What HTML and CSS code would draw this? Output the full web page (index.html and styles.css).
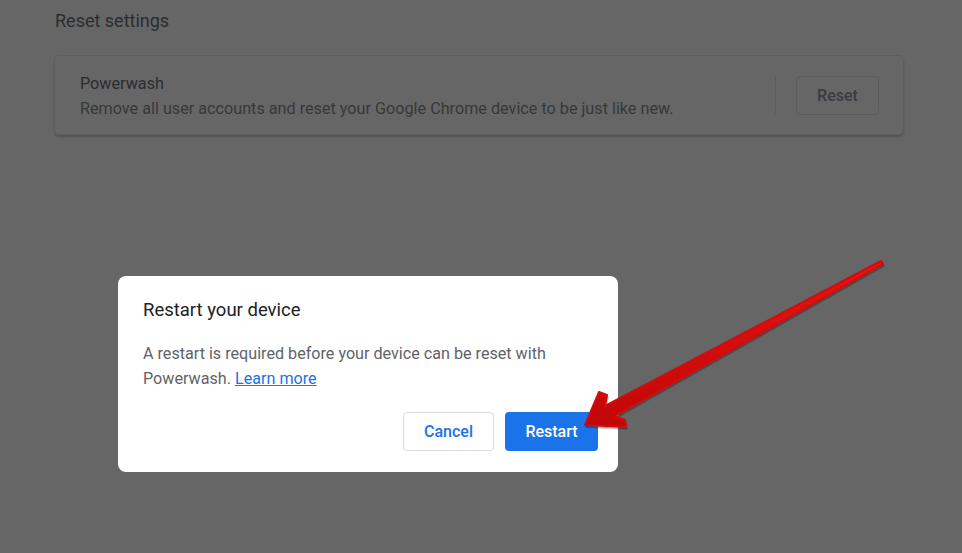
FILE: index.html
```html
<!DOCTYPE html>
<html lang="en">
<head>
    <meta charset="UTF-8">
    <meta name="viewport" content="width=device-width, initial-scale=1.0">
    <title>Reset settings</title>
    <link rel="stylesheet" href="styles.css">
</head>
<body>
    <div class="page">
        <h2 class="section-title">Reset settings</h2>
        <div class="card">
            <div class="card-text">
                <div class="card-label">Powerwash</div>
                <div class="card-sub">Remove all user accounts and reset your Google Chrome device to be just like new.</div>
            </div>
            <div class="separator"></div>
            <button class="reset-btn">Reset</button>
        </div>
    </div>

    <!-- Restart dialog -->
    <div class="dialog-box">
        <h3 class="dialog-title">Restart your device</h3>
        <p class="dialog-body">A restart is required before your device can be reset with Powerwash. <a href="#">Learn more</a></p>
        <div class="dialog-buttons">
            <button class="cancel-btn">Cancel</button>
            <button class="confirm-btn">Restart</button>
        </div>
    </div>

    <!-- annotation arrow -->
    <svg class="arrow" width="962" height="553" viewBox="0 0 962 553">
        <defs>
            <linearGradient id="red" x1="0" y1="0" x2="0" y2="1">
                <stop offset="0" stop-color="#e81414"/>
                <stop offset="1" stop-color="#c10606"/>
            </linearGradient>
        </defs>
        <polygon class="arrow-shadow" points="586,427 600,394 608,397 606,408 882,263 884,266 616,418 626,422 627,429"/>
        <polygon class="arrow-head" points="585,425 599,392 607,395 605,406 881,261 883,264 615,416 625,420 626,427"/>
    </svg>
</body>
</html>
```

FILE: styles.css
```css
body {
    margin: 0;
    padding: 0;
    width: 962px;
    height: 553px;
    overflow: hidden;
    background-color: #666666;
    font-family: Roboto, "Liberation Sans", sans-serif;
}
.page {
    padding: 0 58px 0 54px;
}
.section-title {
    margin: 0;
    padding: 10px 0 0 1px;
    height: 55px;
    box-sizing: border-box;
    font-size: 18px;
    font-weight: 400;
    color: #2b2c2e;
}
.card {
    display: flex;
    align-items: center;
    height: 80px;
    box-sizing: border-box;
    padding: 0 24px 0 25px;
    border: 1px solid #5e5e5e;
    border-radius: 5px;
    box-shadow: 0 2px 2px rgba(0, 0, 0, 0.18);
}
.card-text {
    flex: 1;
    padding-top: 1px;
}
.card-label {
    font-size: 16.2px;
    line-height: 25px;
    color: #2b2c2f;
}
.card-sub {
    font-size: 16.2px;
    line-height: 25px;
    color: #37383b;
}
.separator {
    width: 1px;
    height: 38px;
    background-color: #5c5c5c;
    margin-right: 20px;
}
.reset-btn {
    width: 83px;
    height: 39px;
    background: transparent;
    border: 1px solid #5c5c5c;
    border-radius: 4px;
    font-family: inherit;
    font-size: 16px;
    font-weight: 500;
    color: #393c42;
}
.dialog-box {
    position: fixed;
    left: 118px;
    top: 276px;
    width: 500px;
    height: 196px;
    box-sizing: border-box;
    padding: 21px 20px 21px 25px;
    background: white;
    border-radius: 8px;
}
.dialog-title {
    margin: 0;
    font-size: 18.5px;
    font-weight: 400;
    line-height: 26px;
    color: #202124;
}
.dialog-body {
    margin: 18px 0 0;
    font-size: 16.15px;
    line-height: 25px;
    color: #5f6368;
}
.dialog-body a {
    color: #1a73e8;
}
.dialog-buttons {
    display: flex;
    justify-content: flex-end;
    gap: 11px;
    margin-top: 21px;
}
.dialog-buttons button {
    height: 39px;
    border-radius: 4px;
    font-family: inherit;
    font-size: 16px;
    font-weight: 500;
}
.cancel-btn {
    width: 91px;
    background: white;
    border: 1px solid #dadce0;
    color: #1a73e8;
}
.confirm-btn {
    width: 93px;
    background: #1a73e8;
    border: none;
    color: white;
}
.arrow {
    position: fixed;
    left: 0;
    top: 0;
}
.arrow-shadow {
    fill: rgba(0, 0, 0, 0.18);
    stroke: rgba(0, 0, 0, 0.18);
    stroke-width: 2;
    stroke-linejoin: round;
}
.arrow-head {
    fill: url(#red);
    stroke: #d40b0b;
    stroke-width: 2;
    stroke-linejoin: round;
}
```
